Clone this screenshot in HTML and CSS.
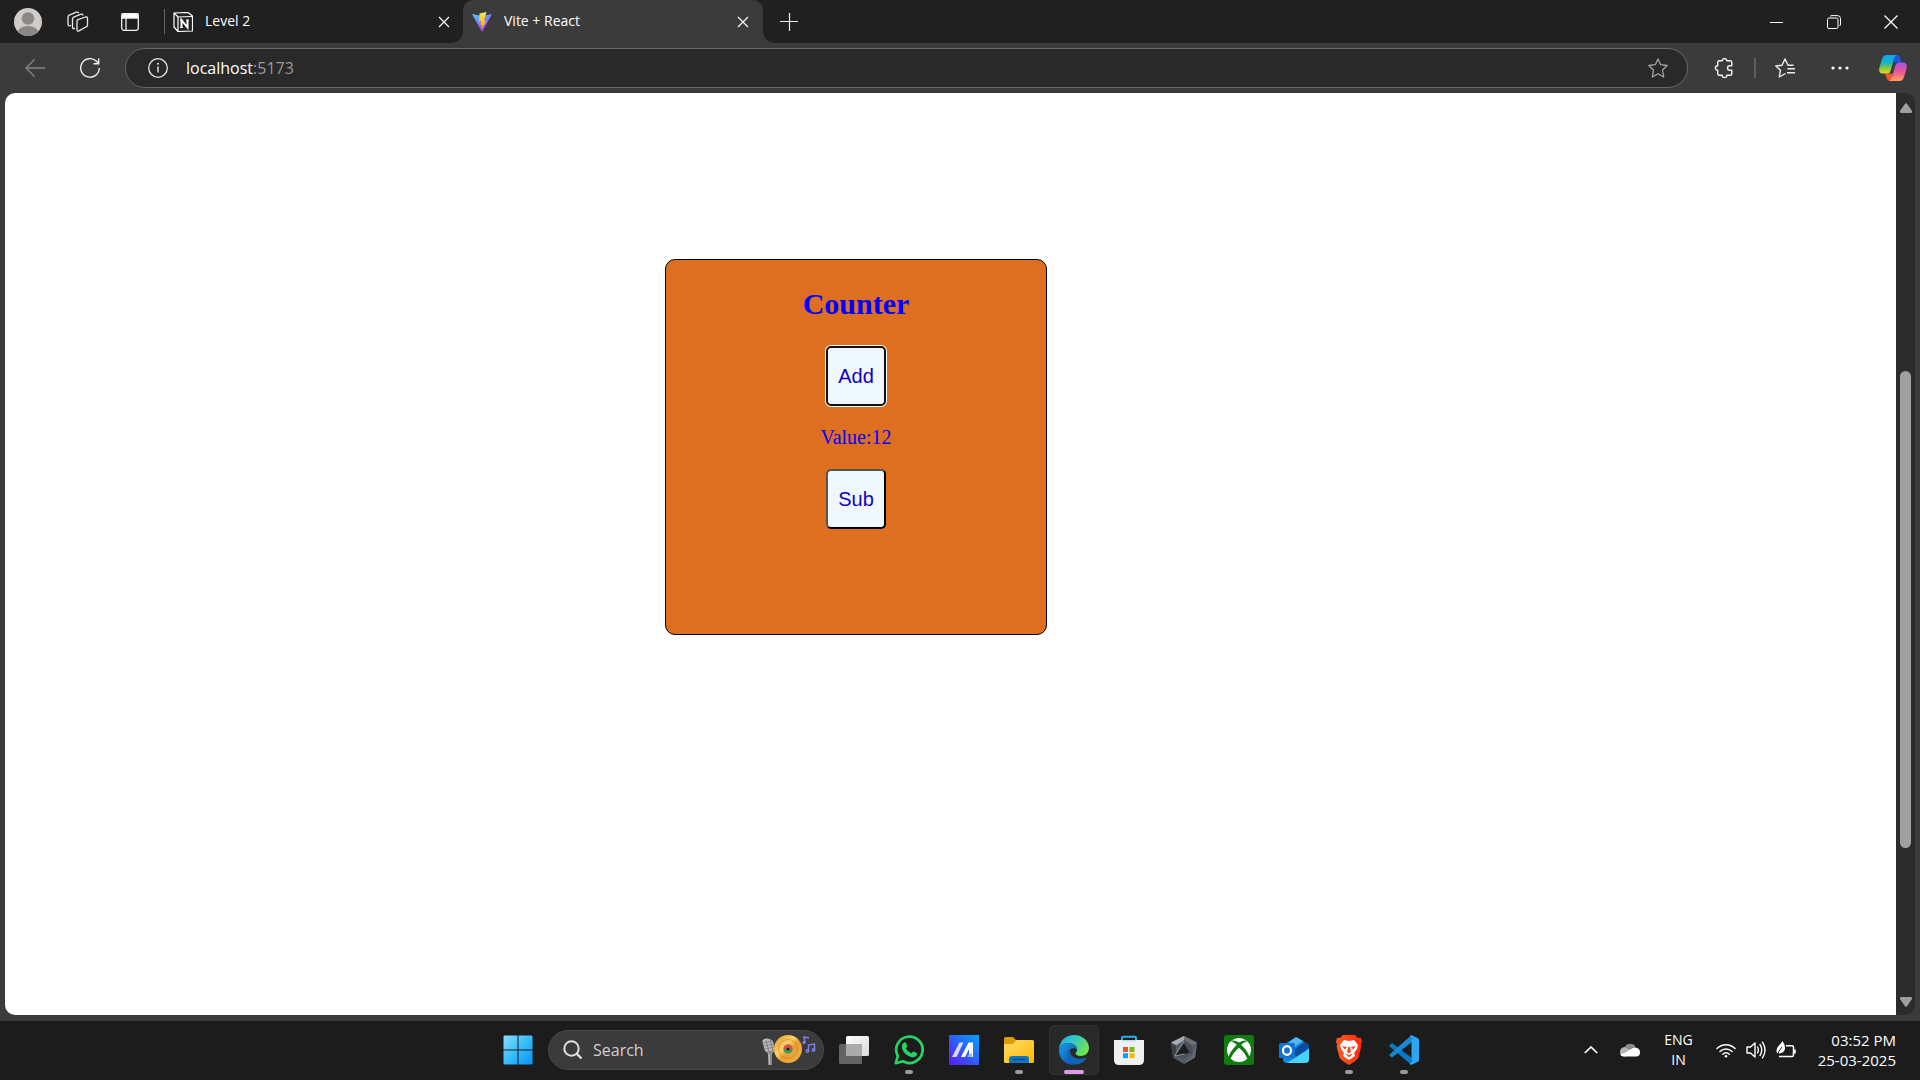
FILE: index.html
```html
<!DOCTYPE html>
<html lang="en">
<head>
<meta charset="utf-8">
<title>Vite + React</title>
<link rel="stylesheet" href="styles.css">
</head>
<body>
<div class="browser">
  <header class="tabbar">
    <div class="tab-tools">
      <button class="icon-btn profile" aria-label="Profile">
        <svg width="28" height="28" viewBox="0 0 28 28"><defs><clipPath id="av"><circle cx="14" cy="14" r="14"/></clipPath></defs><g clip-path="url(#av)"><rect width="28" height="28" fill="#cecbc8"/><circle cx="14" cy="10.500" r="6.200" fill="#8b8784"/><ellipse cx="14" cy="25" rx="10.500" ry="7" fill="#8b8784"/></g></svg>
      </button>
      <button class="icon-btn workspaces" aria-label="Workspaces">
        <svg width="22" height="22" viewBox="0 0 22 22" fill="none" stroke="#e8e8e8" stroke-width="1.300" stroke-linejoin="round" stroke-linecap="round"><path d="M11 8.700 18.500 6q2-.5 2 1.500v6.500q0 1.200-1.200 1.800L12 19.900q-2 .7-2-1.300V10.200q0-1 1-1.500z"/><path d="M7.500 17.500Q5.500 18 5.500 16V8q0-1.300 1.200-1.800L14 3.200q1.500-.5 2 .8"/><path d="M3.500 14.500Q1 15.500 1 13V6q0-1.300 1.200-1.800L9.500 1.200q1.500-.5 2 .6"/></svg>
      </button>
      <button class="icon-btn tab-menu" aria-label="Tab actions menu">
        <svg width="18" height="18" viewBox="0 0 18 18" fill="none" stroke="#f0f0f0" stroke-width="1.300"><rect x=".7" y=".7" width="16.600" height="16.600" rx="2.500"/><path d="M1 1h16v4H1z" fill="#fff"/><path d="M5 5v12"/></svg>
      </button>
      <span class="tab-divider"></span>
    </div>
    <div class="tab">
      <svg width="20" height="20" viewBox="0 0 20 20"><path d="M1 1 15 .5l4.500 3.500v15L5 19.500 1 15z" fill="#222" stroke="#fff" stroke-width="1.200" stroke-linejoin="round"/><path d="M1 1l4 4 14.500-.5M5 5v14.500" fill="none" stroke="#fff" stroke-width="1.200"/><path d="M8.500 15.500V8l6 7.500V8" fill="none" stroke="#fff" stroke-width="2"/><path d="M7 8h2.500M7 15.500h3M13 8h3" stroke="#fff" stroke-width="1.200"/></svg>
      <span class="tab-title">Level 2</span>
      <button class="icon-btn tab-close" aria-label="Close Level 2"><svg width="12" height="12" viewBox="0 0 12 12"><path d="M1 1l10 10M11 1 1 11" stroke="#f2f2f2" stroke-width="1.300"/></svg></button>
    </div>
    <div class="tab active">
      <svg width="20" height="20" viewBox="0 0 20 20"><defs><linearGradient id="vt" x1="0" y1="0" x2=".6" y2="1"><stop stop-color="#41d1ff"/><stop offset="1" stop-color="#bd34fe"/></linearGradient><linearGradient id="vb" x1="0" y1="0" x2="0" y2="1"><stop stop-color="#ffea83"/><stop offset=".2" stop-color="#ffdd35"/><stop offset="1" stop-color="#ffa800"/></linearGradient></defs><path d="M0 2l10 2 10-2-10 18z" fill="url(#vt)"/><path d="M14.500 0 7.500 1.400 7 9.500l2.200-.4-.8 4 1.600-.4 0 4L14 8.800l-2-.4L14.500 0z" fill="url(#vb)"/></svg>
      <span class="tab-title">Vite + React</span>
      <button class="icon-btn tab-close" aria-label="Close Vite + React"><svg width="12" height="12" viewBox="0 0 12 12"><path d="M1 1l10 10M11 1 1 11" stroke="#f2f2f2" stroke-width="1.300"/></svg></button>
    </div>
    <button class="icon-btn new-tab" aria-label="New tab"><svg width="18" height="18" viewBox="0 0 18 18"><path d="M0 8.500h18M9.500 0v18" stroke="#eee" stroke-width="1.200"/></svg></button>
    <div class="window-controls">
      <button class="icon-btn" aria-label="Minimize"><svg width="14" height="14" viewBox="0 0 14 14"><path d="M0 7.500h13" stroke="#fff"/></svg></button>
      <button class="icon-btn" aria-label="Restore"><svg width="14" height="14" viewBox="0 0 14 14" fill="none" stroke="#fff"><rect x=".5" y="3" width="10.500" height="10.500" rx="1.500"/><path d="M3 1.500Q3.500.6 5 .6h5.500q3 0 3 3V9q0 1.300-1 2"/></svg></button>
      <button class="icon-btn" aria-label="Close window"><svg width="14" height="14" viewBox="0 0 14 14"><path d="M.5.5l13 13m0-13-13 13" stroke="#fff" stroke-width="1.200"/></svg></button>
    </div>
  </header>

  <nav class="toolbar">
    <button class="icon-btn back" aria-label="Back"><svg width="20" height="18" viewBox="0 0 20 18"><path d="M20 9H1M9.500.5 1 9l8.500 8.500" fill="none" stroke="#858585" stroke-width="1.300"/></svg></button>
    <button class="icon-btn reload" aria-label="Reload"><svg width="20" height="20" viewBox="0 0 20 20" fill="none" stroke="#f0f0f0" stroke-width="1.400"><path d="M19.300 10A9.300 9.300 0 1 1 16.500 3.300L18.500 5.500M18.700.5v5.300h-5.200"/></svg></button>
    <div class="address">
      <svg width="20" height="20" viewBox="0 0 20 20"><circle cx="10" cy="10" r="9.300" fill="none" stroke="#e8e8e8" stroke-width="1.300"/><path d="M10 8.500v6" stroke="#e8e8e8" stroke-width="1.400"/><circle cx="10" cy="5.800" r="1" fill="#e8e8e8"/></svg>
      <a class="url" href="#counter">localhost<span class="port">:5173</span></a>
      <button class="icon-btn favorite" aria-label="Add to favorites"><svg width="20" height="20" viewBox="0 0 20 20"><path d="M10 .9 12.700 6.700 19.200 7.500 14.500 12l1.200 7L10 15.800 4.300 19l1.200-7L.8 7.500 7.300 6.700z" fill="none" stroke="#a3a3a3" stroke-width="1.300" stroke-linejoin="round"/></svg></button>
    </div>
    <div class="toolbar-actions">
      <button class="icon-btn" aria-label="Extensions"><svg width="20" height="20" viewBox="0 0 20 20"><path d="M5.500 2.800H8.200a2.300 2.300 0 0 1 4.600 0H16q1.800 0 1.800 1.800V7.700h-2a2.300 2.300 0 0 0 0 4.600h2V15.500q0 1.800-1.800 1.800h-3.200a2.300 2.300 0 0 1-4.600 0H5.500q-1.800 0-1.800-1.800v-3.200a2.300 2.300 0 0 1 0-4.600V4.600q0-1.800 1.800-1.800z" fill="none" stroke="#f0f0f0" stroke-width="1.400" stroke-linejoin="round"/></svg></button>
      <span class="divider"></span>
      <button class="icon-btn favorites" aria-label="Favorites"><svg width="20" height="20" viewBox="0 0 20 20" fill="none" stroke="#f0f0f0" stroke-width="1.400" stroke-linejoin="round"><path d="M18.500 7.200H13L10 1 7 7.200.8 8l4.600 4.300L4.200 19l6.300-3.500M12.500 10.700H20M12 14.700h8"/></svg></button>
      <button class="icon-btn more" aria-label="Settings and more"><svg width="18" height="4" viewBox="0 0 18 4" fill="#fff"><circle cx="2" cy="2" r="1.600"/><circle cx="9" cy="2" r="1.600"/><circle cx="16" cy="2" r="1.600"/></svg></button>
      <button class="icon-btn copilot" aria-label="Copilot"><svg width="28" height="26" viewBox="0 0 28 26"><defs><linearGradient id="c1" x1="0" y1="0" x2="0" y2="1"><stop stop-color="#12a3ee"/><stop offset=".4" stop-color="#14b5c9"/><stop offset=".7" stop-color="#7dc642"/><stop offset="1" stop-color="#f7d417"/></linearGradient><linearGradient id="c2" x1="0" y1="0" x2="0" y2="1"><stop stop-color="#a852e8"/><stop offset=".5" stop-color="#ed5594"/><stop offset="1" stop-color="#ffa45a"/></linearGradient></defs><path d="M14 0h4q2.500 0 3.300 3l1.200 4.500H15z" fill="#1b57d8"/><path d="M14 26h-3q-2.500 0-3.300-3L6.200 18.500H13z" fill="#f4572e"/><path d="M7.500 0H18q-2 .4-2.700 3l-3.500 12q-1 3.500-3.500 3.500H4Q-.6 18.500.3 13L3 4Q4.200 0 7.500 0z" fill="url(#c1)"/><path d="M20.500 26H10q2-.4 2.700-3l3.500-12q1-3.500 3.500-3.500H24q4.600 0 3.700 5.500L25 22q-1.200 4-4.500 4z" fill="url(#c2)"/></svg></button>
    </div>
  </nav>

  <div class="viewport">
    <main class="page" id="counter">
      <section class="card">
        <h2>Counter</h2>
        <button class="count-btn focused">Add</button>
        <p>Value:12</p>
        <button class="count-btn">Sub</button>
      </section>
    </main>
    <div class="scrollbar">
      <svg width="12" height="10" viewBox="0 0 12 10"><path d="M5 .8q1-1.300 2 0L12 8q.5 1.700-1 2H1Q-.5 9.700 0 8z" fill="#9f9f9f"/></svg>
      <div class="track"><div class="thumb"></div></div>
      <svg width="12" height="10" viewBox="0 0 12 10"><path d="M5 9.200q1 1.300 2 0L12 2q.5-1.700-1-2H1Q-.5.3 0 2z" fill="#9f9f9f"/></svg>
    </div>
  </div>
</div>

<footer class="taskbar">
  <div class="apps">
    <button class="app" aria-label="Start"><svg width="30" height="30" viewBox="0 0 30 30"><defs><linearGradient id="w" x1="0" y1="0" x2="1" y2="1"><stop stop-color="#8be0ff"/><stop offset=".5" stop-color="#35bdfa"/><stop offset="1" stop-color="#0a93f5"/></linearGradient></defs><path d="M1.500.5H14.500V14.500H.5V1.500zM15.500.5H28.500l1 1V14.500h-14zM.5 15.500h14v14H1.500l-1-1zM15.500 15.500h14v13l-1 1h-13z" fill="url(#w)"/></svg></button>
    <label class="search">
      <svg width="20" height="20" viewBox="0 0 20 20"><circle cx="8.500" cy="8.500" r="7.200" fill="none" stroke="#e0e0e0" stroke-width="2"/><path d="M13.500 13.500l5 5" stroke="#e0e0e0" stroke-width="2.400"/></svg>
      <input type="text" placeholder="Search" aria-label="Search">
      <svg width="56" height="34" viewBox="0 0 56 34"><defs><linearGradient id="vin" x1="0" y1="0" x2="1" y2="1"><stop stop-color="#dd9023"/><stop offset=".4" stop-color="#fcd36d"/><stop offset=".55" stop-color="#e89e30"/><stop offset="1" stop-color="#efb34c"/></linearGradient></defs><path d="M1.500 9q-.5-3 3.500-3.500T12 8l2 9q-1 3-4.500 3L9 32H7.500L7 20.500 4 18z" fill="#b9b9b9"/><path d="M2 10l10-2M3 13l10-2M4 16l9-2M5 7l3 12M9 6l3 12" stroke="#777" stroke-width=".8"/><path d="M4 17q4 3 9-1l-2 6v10H9V22z" fill="#8a8a8a"/><circle cx="27" cy="16" r="14" fill="url(#vin)"/><circle cx="27" cy="16" r="9.500" fill="none" stroke="#c77d1c" stroke-width=".6"/><circle cx="27" cy="16" r="4.600" fill="#3a9c65"/><path d="M22.400 16a4.600 4.600 0 0 1 9.200 0z" fill="#e2513f"/><circle cx="27" cy="16" r="1.600" fill="#28221e"/><g fill="none" stroke="#8281e6" stroke-width="1.400"><path d="M44 9.500 43 4l5 1"/><circle cx="43" cy="9.500" r="1"/><path d="M47.500 18V12l6-1v6"/><circle cx="46.500" cy="18" r="1.300"/><circle cx="52.500" cy="17" r="1.300"/></g></svg>
    </label>
    <button class="app" aria-label="Task view"><svg width="30" height="30" viewBox="0 0 30 30"><defs><linearGradient id="tv" x1="0" y1="0" x2="1" y2="1"><stop stop-color="#fff"/><stop offset="1" stop-color="#d8d8d8"/></linearGradient></defs><rect x="7" y="1" width="23" height="20" rx="1.500" fill="url(#tv)"/><rect x="0" y="9" width="23" height="20" rx="1.500" fill="#707070" fill-opacity=".85"/><path d="M7 9h16v12H7z" fill="#aaa"/></svg></button>
    <button class="app running" aria-label="WhatsApp"><svg width="30" height="30" viewBox="0 0 30 30"><path d="M1.800 28.200 3.800 21A13.200 13.200 0 1 1 9 26.300z" fill="none" stroke="#25d366" stroke-width="2.700" stroke-linejoin="round"/><path d="M10 7.500q1.500-.6 2 .6l1.200 3q.2.800-1.400 2.400 2 3.500 5.700 4.900 1.500-2.200 2.200-1.900l3 1.500q.8.500-.1 2.500-1.500 2.300-4.600 1.700Q10.500 20.500 8 13.500 7.300 9.500 10 7.500z" fill="#25d366"/></svg></button>
    <button class="app" aria-label="MyASUS"><svg width="30" height="30" viewBox="0 0 30 30"><defs><linearGradient id="my" x1="0" y1="1" x2="1" y2="0"><stop stop-color="#5c18f5"/><stop offset=".5" stop-color="#2f5df8"/><stop offset="1" stop-color="#00a6ff"/></linearGradient></defs><path d="M0 0h30v30H0z" fill="url(#my)"/><path d="M3 22 10.500 7.500h4L7.500 22z" fill="#d9dcff"/><path d="M12 22 19.500 7.500H24V22h-4v-8l-4 8z" fill="#fff"/><path d="M18 21l5-3v4h-4z" fill="#9fb2f8"/></svg></button>
    <button class="app running" aria-label="File Explorer"><svg width="30" height="30" viewBox="0 0 30 30"><defs><linearGradient id="fo" x1="0" y1="0" x2="1" y2="1"><stop stop-color="#ffdc6b"/><stop offset="1" stop-color="#ffb900"/></linearGradient></defs><path d="M0 3.500Q0 2 1.500 2H9l3 3h14v8H0z" fill="#dd9a07"/><path d="M0 9h9l3-4h16.500Q30 5 30 6.500v20q0 1.500-1.500 1.500h-27Q0 28 0 26.500z" fill="url(#fo)"/><path d="M5 28v-4q0-3 3-3h14q3 0 3 3v4z" fill="#1275bf"/><path d="M9 24.500h12" stroke="#0a4b85" stroke-width="1.400" stroke-linecap="round"/></svg></button>
    <button class="app running current" aria-label="Microsoft Edge"><svg width="30" height="30" viewBox="0 0 30 30"><defs><linearGradient id="e1" x1="0" y1="0" x2="1" y2=".5"><stop stop-color="#1caee6"/><stop offset=".5" stop-color="#34c7c4"/><stop offset="1" stop-color="#6ee44e"/></linearGradient><linearGradient id="e2" x1="0" y1="0" x2="1" y2="1"><stop stop-color="#1a9be8"/><stop offset="1" stop-color="#0b4da5"/></linearGradient></defs><path d="M0 14C1 5 7 0 15 0c9 0 15 6.500 15 13 0 5-4 8-8 8-3.500 0-5.500-1.500-5.500-2.500 0-.8 1.500-1.700 1.500-4C18 10.500 13.500 8 9 8 4 8 1 11 0 14z" fill="url(#e1)"/><path d="M0 15.500C0 10.500 4.500 8 9 8c5 0 9 3 9 6.500-1-1.500-7-3-8.500 3.500C8.500 24 13 28.500 17 29.800 7 31 0 24 0 15.500z" fill="url(#e2)"/><path d="M11 14.500C6.500 21 11 29 18 29.600c4-.6 7-2.800 9-5.800.7-1-.1-1.600-1-1.100C19.500 26 10 22 11 14.500z" fill="#0c65b5"/></svg></button>
    <button class="app" aria-label="Microsoft Store"><svg width="30" height="30" viewBox="0 0 30 30"><path d="M8 7V2.800Q8 1.700 9.200 1.700h11.600q1.200 0 1.200 1.100V7" fill="none" stroke="#24b1ec" stroke-width="2"/><path d="M0 5h30v20q0 5-5 5H5q-5 0-5-5z" fill="#f0f0f0"/><path d="M8 5h14v1.500H8z" fill="#24b1ec" fill-opacity=".25"/><path d="M9 12h5v5H9z" fill="#f25022"/><path d="M15.500 12h5v5h-5z" fill="#7fba00"/><path d="M9 18.200h5v5H9z" fill="#00a4ef"/><path d="M15.500 18.200h5v5h-5z" fill="#ffb900"/></svg></button>
    <button class="app" aria-label="Armoury Crate"><svg width="30" height="30" viewBox="0 0 30 30"><path d="M15 1l13 6.500-2 15L15 29 4 22.500 2 7.500z" fill="#555b64"/><path d="M15 1 2 7.500l5 3L15 5z" fill="#a7acb4"/><path d="M15 1v4l8 5.500 5-3z" fill="#6c727b"/><path d="M2 7.500l2 15 3-1 0-11z" fill="#3c4047"/><path d="M28 7.500l-2 15L15 29l8-8z" fill="#666b73"/><path d="M15 8 21 18 6 21z" fill="#1c1e22"/><path d="M15 5l6 13 2 3V10.500zM6 21l15-3-5 6z" fill="#4a4f57"/><path d="M15 6 5.500 21l10-2" fill="none" stroke="#90959d" stroke-width="1"/></svg></button>
    <button class="app" aria-label="Xbox"><svg width="30" height="30" viewBox="0 0 30 30"><rect width="30" height="30" rx="3" fill="#107c10"/><circle cx="15" cy="15" r="12" fill="#fff"/><path d="M6.500 6Q10 4.500 15 7.500 20 4.500 23.500 6 20 7 17.200 9.800 24 16.500 25.500 22L23.500 24Q20.500 17 15 12.700 9.500 17 6.500 24L4.500 22Q6 16.500 12.800 9.800 10 7 6.500 6z" fill="#107c10"/></svg></button>
    <button class="app" aria-label="Outlook"><svg width="30" height="30" viewBox="0 0 30 30"><path d="M4 10 17 2l13 8v14q0 4-4 4H8q-4 0-4-4z" fill="#1688dd"/><path d="M8 9 17 2l7 4-12 8z" fill="#52b8f5"/><path d="M14 15 26 7l4 3v3L17 22z" fill="#0a4ca2"/><path d="M8 28 30 14v10q0 4-4 4z" fill="#48d5fa"/><rect y="8" width="16" height="15" rx="1.500" fill="#0f74d4"/><ellipse cx="8" cy="15.500" rx="4" ry="4.300" fill="none" stroke="#fff" stroke-width="2.200"/></svg></button>
    <button class="app running" aria-label="Brave"><svg width="30" height="30" viewBox="0 0 30 30"><defs><linearGradient id="br"><stop stop-color="#ff5a22"/><stop offset="1" stop-color="#f82c0c"/></linearGradient></defs><path d="M9 0h12l3 3 3-.2 1 4.200-1 2 .3 3-3 11Q22 26 15 30 8 26 5.700 23l-3-11L3 9 2 7l1-4.200L6 3z" fill="url(#br)"/><path d="M10 5l5 1 5-1 4 5-1 4-3 4 1 3-6 4-6-4 1-3-3-4-1-4z" fill="#fff"/><path d="M8 11l5 1-2 2.500zM22 11l-5 1 2 2.500zM14 12h2l1 5-2 1.500-2-1.500zM11 18.500l4 1.500 4-1.500-4 4z" fill="#fb4a1c"/></svg></button>
    <button class="app running" aria-label="Visual Studio Code"><svg width="30" height="30" viewBox="0 0 30 30"><path d="M0 10.500 3 8l20 15-1 6.500L.5 11.500z" fill="#0879c5"/><path d="M0 20 22 .5 23 7 3 22.500 0 20z" fill="#168bd4"/><path d="M22 0l7 3.200q1 .5 1 1.600v20.400q0 1.100-1 1.600L22 30q-1-.2-1.200-1.500L22.500 27V3L21 1.500q0-1 1-1.500z" fill="#2ca5f2"/></svg></button>
  </div>
  <div class="tray">
    <button class="icon-btn" aria-label="Show hidden icons"><svg width="14" height="8" viewBox="0 0 14 8"><path d="M.8 7 7 1l6.200 6" fill="none" stroke="#fff" stroke-width="1.700"/></svg></button>
    <button class="icon-btn" aria-label="OneDrive"><svg width="20" height="14" viewBox="0 0 20 14"><path d="M4.500 5a6 6 0 0 1 11.500 0l-6 4z" fill="#8a8a8a"/><path d="M0 9q0-4.500 5-5l8 5-8 4.500Q0 13.500 0 9z" fill="#b5b5b5"/><path d="M13 5q7-1 7 4.500 0 4-4 4H4Q.7 13.500.5 11q5-.5 8-3.500z" fill="#fff"/></svg></button>
    <button class="icon-btn lang"><span>ENG</span><span>IN</span></button>
    <button class="icon-btn status" aria-label="Network, sound and battery">
      <svg width="20" height="16" viewBox="0 0 20 16" fill="none" stroke="#fff" stroke-width="1.500" stroke-linecap="round"><path d="M1 6.500a12.500 12.500 0 0 1 18 0M4 9.500a8.400 8.400 0 0 1 12 0M6.800 12.200a4.500 4.500 0 0 1 6.400 0"/><circle cx="10" cy="14.200" r="1.300" fill="#fff" stroke="none"/></svg>
      <svg width="20" height="18" viewBox="0 0 20 18" fill="none" stroke="#fff" stroke-width="1.400" stroke-linejoin="round" stroke-linecap="round"><path d="M1 6h3.500L9 2v14l-4.500-4H1zM11.500 6q1.800 3 0 6M14 3.500q3.500 5.500 0 11M16.500 1.200q5 7.800 0 15.600"/></svg>
      <svg width="20" height="18" viewBox="0 0 20 18"><path d="M10 4.700h6q1.500 0 1.500 1.500V14q0 1.500-1.500 1.500H3M19 8.500v4" fill="none" stroke="#fff" stroke-width="1.500"/><path d="M1 12Q-.5 8 2.500 5T6.500 0Q9 3.500 9 7q0 4.500-5.500 5.500z" fill="#fff"/><path d="M1.500 15q.5-5 4.500-9" fill="none" stroke="#1c1c1c" stroke-width="1"/></svg>
    </button>
    <button class="icon-btn clock"><span>03:52 PM</span><span>25-03-2025</span></button>
  </div>
</footer>
</body>
</html>
```
FILE: styles.css
```css
* {
  box-sizing: border-box;
}

html,
body {
  height: 100%;
  margin: 0;
}

body {
  display: flex;
  flex-direction: column;
  background: #1c1c1c;
  color: #fff;
  font-family: "Open Sans", "Noto Sans", sans-serif;
  font-size: 14px;
}

svg {
  display: block;
  flex: none;
}

.icon-btn {
  display: flex;
  align-items: center;
  justify-content: center;
  padding: 0;
  border: 0;
  background: none;
  color: inherit;
  font: inherit;
}

.browser {
  display: flex;
  flex: 1;
  flex-direction: column;
  min-height: 0;
  background: #3b3b3b;
}

/* Tab strip */
.tabbar {
  display: flex;
  height: 43px;
  background: #202020;
}

.tab-tools {
  display: flex;
  align-items: center;
  width: 165px;
  padding-left: 14px;
}

.workspaces {
  margin-left: 25px;
}

.tab-menu {
  margin-left: 32px;
}

.tab-divider {
  width: 1px;
  height: 25px;
  margin-left: auto;
  background: #666;
}

.tab {
  display: flex;
  align-items: center;
  gap: 12px;
  width: 298px;
  padding: 0 13px 0 8px;
}

.tab.active {
  position: relative;
  width: 300px;
  padding: 0 14px 0 9px;
  border-radius: 10px 10px 0 0;
  background: #3b3b3b;
}

.tab.active::before,
.tab.active::after {
  position: absolute;
  bottom: 0;
  width: 10px;
  height: 10px;
  content: "";
}

.tab.active::before {
  right: 100%;
  background: radial-gradient(circle at 0 0, #202020 9px, #3b3b3b 10px);
}

.tab.active::after {
  left: 100%;
  background: radial-gradient(circle at 100% 0, #202020 9px, #3b3b3b 10px);
}

.tab-title {
  flex: 1;
  padding-bottom: 2px;
  line-height: 20px;
}

.new-tab {
  width: 52px;
}

.window-controls {
  display: flex;
  margin-left: auto;
  padding-right: 1px;
}

.window-controls .icon-btn {
  width: 57px;
}

/* Address toolbar */
.toolbar {
  display: flex;
  align-items: center;
  height: 50px;
  padding-left: 25px;
}

.reload {
  margin-left: 35px;
}

.address {
  display: flex;
  flex: 1;
  align-items: center;
  height: 40px;
  margin-left: 25px;
  padding: 0 19px 0 22px;
  border: 1px solid #666;
  border-radius: 20px;
  background: #292929;
}

.url {
  flex: 1;
  margin-left: 18px;
  color: #fff;
  font-size: 16px;
  line-height: 24px;
  text-decoration: none;
}

.port {
  color: #999;
}

.toolbar-actions {
  display: flex;
  align-items: center;
  padding: 0 13px 0 26px;
}

.divider {
  width: 2px;
  height: 20px;
  margin: 0 19px 0 20px;
  background: #5e5e5e;
}

.more {
  margin: 0 30px 0 36px;
}

/* Page area */
.viewport {
  display: flex;
  flex: 1;
  min-height: 0;
  margin: 0 5px 6px;
  overflow: hidden;
  border-radius: 10px;
  background: #2b2b2b;
}

.page {
  flex: 1;
  padding: 166px 0 0 660px;
  background: #fff;
}

.card {
  display: flex;
  flex-direction: column;
  align-items: center;
  width: 382px;
  min-height: 376px;
  padding-top: 26px;
  border: 1px solid #000;
  border-radius: 10px;
  background: #de6f20;
  color: #00f;
  font-family: "Liberation Serif", serif;
}

.card h2 {
  margin: 0 0 25px;
  font-size: 30px;
  line-height: 35px;
}

.card p {
  margin: 20px 0;
  font-size: 20px;
  line-height: 23px;
}

.count-btn {
  width: 60px;
  height: 60px;
  padding: 0;
  border: 2px outset #000;
  border-radius: 5px;
  background: aliceblue;
  color: #1200c8;
  font-family: "Liberation Sans", sans-serif;
  font-size: 20px;
}

.count-btn.focused {
  border: 2px solid #101010;
  box-shadow: 0 0 0 1px #fff;
}

.scrollbar {
  display: flex;
  flex-direction: column;
  align-items: center;
  width: 19px;
  padding: 10px 0 8px;
}

.track {
  flex: 1;
}

.thumb {
  width: 11px;
  height: 54%;
  margin-top: 258px;
  border-radius: 6px;
  background: #9f9f9f;
}

/* Taskbar */
.taskbar {
  display: grid;
  grid-template-columns: 1fr auto 1fr;
  align-items: center;
  height: 59px;
  padding: 0 0 1px 2px;
}

.apps {
  display: flex;
  grid-column: 2;
  align-items: center;
  gap: 5px;
}

.app {
  position: relative;
  display: flex;
  align-items: center;
  justify-content: center;
  width: 50px;
  height: 50px;
  padding: 0;
  border: 1px solid transparent;
  border-radius: 5px;
  background: none;
}

.app.current {
  border-color: #333;
  background: #292929;
}

.app.running::after {
  position: absolute;
  bottom: 0;
  left: 50%;
  width: 8px;
  height: 4px;
  border-radius: 2px;
  background: #9a9a9a;
  content: "";
  transform: translateX(-50%);
}

.app.current::after {
  width: 20px;
  background: #dd9de6;
}

.search {
  display: flex;
  align-items: center;
  width: 276px;
  height: 40px;
  padding: 0 6px 0 14px;
  border: 1px solid #484848;
  border-radius: 20px;
  background: #3b3b3b;
}

.search input {
  flex: 1;
  min-width: 0;
  margin-left: 10px;
  padding: 0;
  border: 0;
  outline: 0;
  background: none;
  color: #fff;
  font: inherit;
  font-size: 16px;
}

.search input::placeholder {
  color: #d0d0d0;
  opacity: 1;
}

.tray {
  display: flex;
  grid-column: 3;
  align-items: center;
  justify-content: flex-end;
  gap: 22px;
  padding-right: 24px;
  line-height: 20px;
}

.status {
  gap: 10px;
}

.lang,
.clock {
  flex-direction: column;
}

.lang {
  padding: 0 1px 0 2px;
}

.clock {
  align-items: flex-end;
  font-size: 15px;
}
```
